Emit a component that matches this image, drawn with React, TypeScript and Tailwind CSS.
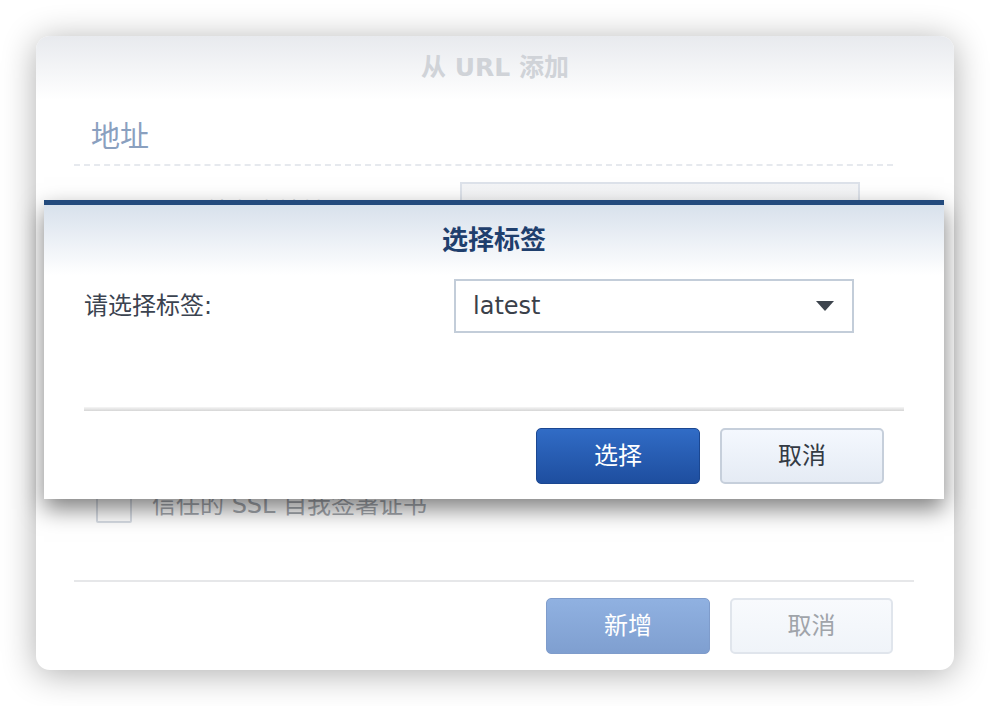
import React from "react";

const font = "font-['DejaVu_Sans','Noto_Sans_CJK_SC',sans-serif]";

function BackDialog() {
  return (
    <div className="flex h-full flex-col rounded-[14px] bg-white shadow-[0_4px_34px_rgba(0,0,0,0.32)] overflow-hidden">
      {/* header */}
      <div className="flex h-[64px] items-center justify-center bg-gradient-to-b from-[#e8eaee] to-white">
        <span className="text-[25px] font-bold text-[#d0d3d8]">从 URL 添加</span>
      </div>

      <div className="flex flex-1 flex-col px-[38px]">
        <div className="mt-[17px] h-[40px] pl-[17px] text-[29px] leading-[40px] text-[#8aa0bf]">地址</div>
        <div className="mt-[7px] w-[819px] border-b-2 border-dashed border-[#e6e9ee]" />

        {/* first row, mostly covered */}
        <div className="mt-[16px] flex items-start">
          <div className="w-[386px] pl-[132px] pt-[18px] text-[24px] leading-none text-[#b9bdc3]">储存库地址</div>
          <div className="h-[50px] w-[400px] border-2 border-[#dde2ea] bg-gradient-to-b from-[#f3f4f6] to-white" />
        </div>

        <div className="flex-1" />

        {/* checkbox row */}
        <div className="flex items-center">
          <div className="ml-[22px] h-[36px] w-[36px] rounded-[2px] border-2 border-[#d7dce4] bg-white" />
          <span className="ml-[20px] text-[24px] text-[#a5a9af]">信任的 SSL 自我签署证书</span>
        </div>

        {/* footer */}
        <div className="mt-[57px] h-[2px] w-[840px] bg-[#e6e7e9]" />
        <div className="mt-[16px] mb-[16px] flex justify-end gap-[20px] pr-[23px]">
          <div className="flex h-[56px] w-[164px] items-center justify-center rounded-[5px] border border-[#7f9ccb] bg-gradient-to-b from-[#90b1e1] to-[#7f9fd0] text-[24px] text-white">
            新增
          </div>
          <div className="flex h-[56px] w-[163px] items-center justify-center rounded-[5px] border-2 border-[#e0e5ec] bg-gradient-to-b from-[#f8fafd] to-[#f0f4f9] text-[24px] text-[#a0a4aa]">
            取消
          </div>
        </div>
      </div>
    </div>
  );
}

function TagModal() {
  return (
    <div className="absolute left-[44px] top-[200px] flex w-[900px] flex-col border-t-[5px] border-[#234a7d] bg-white shadow-[0_10px_22px_rgba(0,0,0,0.5)]">
      <div className="flex h-[70px] items-center justify-center bg-gradient-to-b from-[#d8e1ec] to-white">
        <span className="text-[26px] font-bold text-[#1f3f6d]">选择标签</span>
      </div>

      <div className="flex flex-col px-[40px]">
        <div className="mt-[4px] flex items-center">
          <span className="w-[370px] text-[24px] text-[#3b4350]">请选择标签:</span>
          <div className="flex h-[54px] w-[400px] items-center justify-between border-2 border-[#c3cdd9] pl-[17px] pr-[18px]">
            <span className="text-[24px] text-[#3a404a]">latest</span>
            <svg width="18" height="10" viewBox="0 0 18 10">
              <path d="M0 0 L18 0 L9 10 Z" fill="#3d444d" />
            </svg>
          </div>
        </div>

        <div className="mt-[74px] h-[4px] w-full bg-gradient-to-b from-[#f6f6f6] to-[#d6d6d6]" />

        <div className="mt-[17px] mb-[15px] flex justify-end gap-[20px] pr-[20px]">
          <div className="flex h-[56px] w-[164px] items-center justify-center rounded-[5px] border border-[#1b4791] bg-gradient-to-b from-[#316cc6] to-[#1e4e9f] text-[24px] text-white">
            选择
          </div>
          <div className="flex h-[56px] w-[164px] items-center justify-center rounded-[5px] border-2 border-[#c6cfdb] bg-gradient-to-b from-[#f4f8fe] to-[#e5ebf4] text-[24px] text-[#333a44]">
            取消
          </div>
        </div>
      </div>
    </div>
  );
}

export default function App() {
  return (
    <div className={`relative h-[706px] w-[990px] bg-white ${font}`}>
      <div className="h-full px-[36px] pt-[36px] pb-[36px]">
        <BackDialog />
      </div>
      <TagModal />
    </div>
  );
}
